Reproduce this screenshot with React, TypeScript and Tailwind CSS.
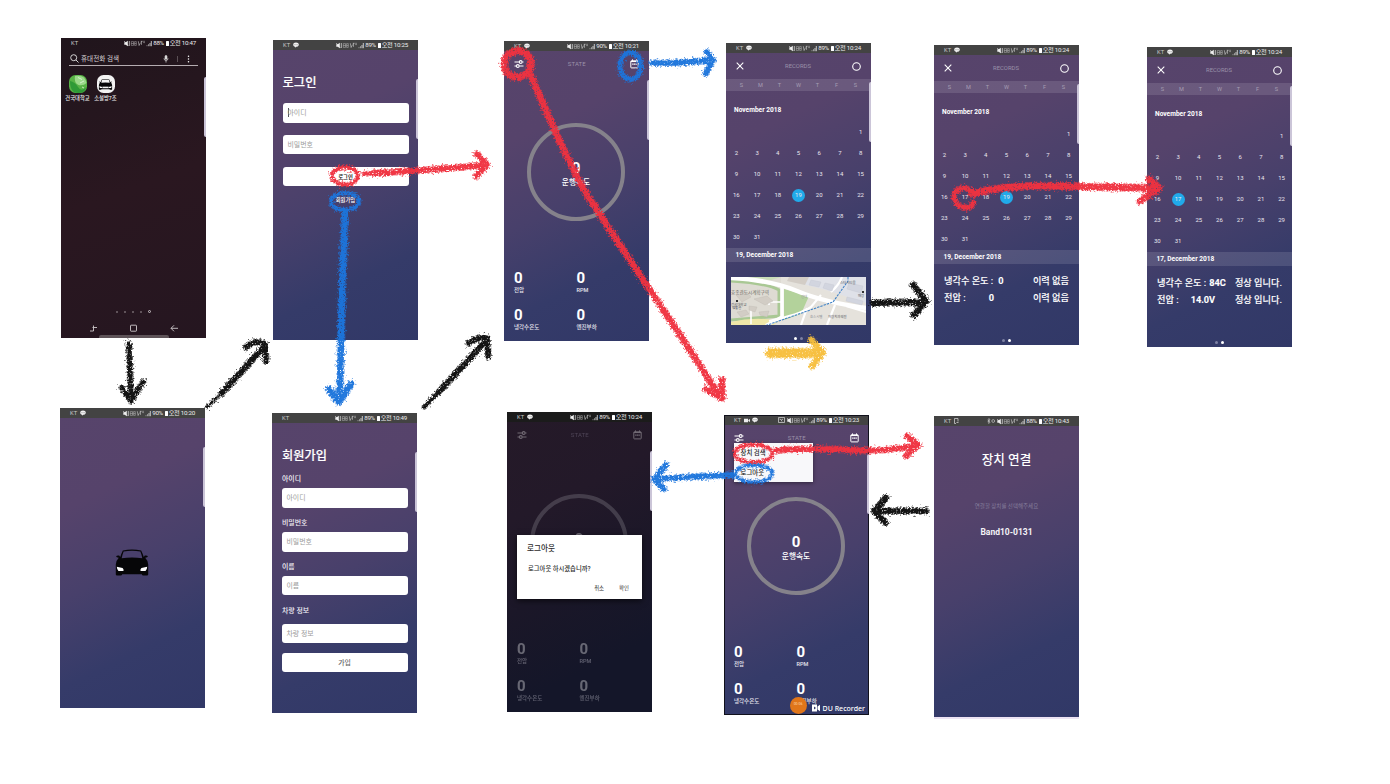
import type { ReactNode } from "react";

const FONT = "font-[Roboto,'Noto_Sans_CJK_KR',sans-serif]";
const PURPLE =
  "bg-[linear-gradient(154deg,#57446b_0%,#56436b_28%,#48406b_52%,#353b69_76%,#313867_100%)]";

/* ---------- status bar ---------- */

function Chat() {
  return (
    <svg width="6" height="6" viewBox="0 0 12 12">
      <path d="M6 1.200c3.200 0 5.600 1.800 5.600 4.200S9.200 9.600 6 9.600L4 11.500V9.300C1.900 8.700.4 7.300.4 5.400.4 3 2.800 1.200 6 1.200z" fill="#f2f2f2" />
      <path d="M3 5.400h1.300M5.400 5.400h1.300M7.800 5.400h1.300" stroke="#555" strokeWidth="1.300" />
    </svg>
  );
}

function Signals() {
  return (
    <svg width="28" height="7" viewBox="0 0 28 7" fill="none" stroke="#e8e8e8">
      <path d="M.3 2.300h1.400L3.800.8v5.400L1.700 4.700H.3z" fill="#eee" stroke="none" />
      <path d="M.2 1l4.200 5" strokeWidth=".6" stroke="#eee" />
      <path d="M5.300 1v5" strokeWidth=".7" />
      <path d="M7.300 1.600h2.200v3.800H7.300zM7.300 3.500h2.200M10.600 1.600h1.700v3.800h-1.700zM10.600 3.500h1.700" strokeWidth=".5" opacity=".75" />
      <path d="M14.300 1.200l.8 4.300 1.500-3M17.500 1.200v3.600M16.700 1.300h2M19.300 1.300h1.500M19.300 2.600h1.500" strokeWidth=".6" opacity=".85" />
      <path d="M23 6.200v-1M24.500 6.200V4.200" strokeWidth=".8" opacity=".7" />
      <path d="M26 6.200V3M27.300 6.200V1" strokeWidth=".8" />
    </svg>
  );
}

function StatusBar({
  pct,
  time,
  bg = "bg-[#434343]",
  chat = true,
  left,
  extra,
}: {
  pct: string;
  time: string;
  bg?: string;
  chat?: boolean;
  left?: ReactNode;
  extra?: ReactNode;
}) {
  return (
    <div className={`flex h-[10px] shrink-0 items-center pr-[10px] pl-[10px] text-[6.200px] leading-none text-[#ececec] ${bg}`}>
      <span className="mr-[3px] pt-[1px] text-[5.800px] text-[#c9c9c9]">KT</span>
      {left}
      {chat && <Chat />}
      <span className="ml-auto flex items-center whitespace-nowrap">
        {extra}
        <Signals />
        <span className="ml-[1px] tracking-[-0.400px]">{pct}</span>
        <span className="mr-[1px] ml-[2px] h-[5px] w-[3px] rounded-[0.5px] bg-white" />
        <span className="tracking-[-0.250px]">오전 {time}</span>
      </span>
    </div>
  );
}

/* ---------- phone frame ---------- */

function Phone({
  place,
  children,
  bg = PURPLE,
  handle = true,
}: {
  place: string;
  children: ReactNode;
  bg?: string;
  handle?: boolean;
}) {
  return (
    <section className={`absolute flex h-[300px] w-[145px] flex-col overflow-hidden ${place} ${bg}`}>
      {children}
      {handle && <span className="absolute top-[39px] right-0 h-[60px] w-[2px] rounded-l-[2px] bg-[#cbc5d8]" />}
    </section>
  );
}

/* ---------- icons ---------- */

function Sliders() {
  return (
    <svg width="10" height="10" viewBox="0 0 10 10" fill="none" stroke="#fff" strokeWidth="1.100">
      <path d="M.5 3h4.700M8.200 3h1.300M.5 7h1.800M5.300 7h4.200" />
      <circle cx="6.700" cy="3" r="1.400" />
      <circle cx="3.800" cy="7" r="1.400" />
    </svg>
  );
}

function Calendar() {
  return (
    <svg width="9" height="10" viewBox="0 0 9 10" fill="none" stroke="#fff">
      <rect x=".8" y="1.900" width="7.400" height="7" rx=".6" />
      <path d="M.8 2.400h7.400" strokeWidth="1.300" />
      <path d="M2.500.4v1.500M6.500.4v1.500" />
      <path d="M2.200 5.200h4.600" strokeWidth="1.200" strokeDasharray="1.300 .35" />
    </svg>
  );
}

function Car({ className, hollow = false }: { className: string; hollow?: boolean }) {
  const glass = hollow ? "#f3f3f3" : "#49406c";
  return (
    <svg className={className} viewBox="0 0 36 28">
      <path
        d="M8.500 1.500Q18-.4 27.500 1.500q1.500 3 2.700 6.800l1.100-1.600q2.700-.4 3.200 1.200-.3 1-2.800 1.100Q34.600 12 34.800 16v10.500q-.2 1-1.200 1h-4.300q-1 0-1.100-1.200H7.800q-.1 1.200-1.100 1.200H2.400q-1 0-1.200-1V16Q1.400 12 4.300 9 1.800 8.900 1.500 7.900q.5-1.600 3.200-1.200l1.100 1.600Q7 4.500 8.500 1.500z"
        fill="#060608"
      />
      <path d="M9.300 2.600Q18 1.100 26.700 2.600q1.200 3 2 7Q18 7.800 7.300 9.600q.8-4 2-7z" fill={glass} />
      <path d="M2.200 18.500l6 1.200q1.400 1.300 1 3H4Q2.400 21.500 2.200 18.500zM33.800 18.500l-6 1.200q-1.400 1.300-1 3H32q1.600-1.200 1.800-4.200z" fill="#fff" />
      {hollow && <path d="M10 19.500h16v4H10z" fill="#f3f3f3" />}
    </svg>
  );
}

/* ---------- home screen ---------- */

function Home() {
  return (
    <>
      <StatusBar pct="88%" time="10:47" bg="bg-transparent" chat={false} />
      <div className="mx-[8px] flex h-[18px] items-center border-b border-[#b5adb1] pt-[4px] text-[6.600px] leading-none text-[#d5d0d2]">
        <svg className="ml-px" width="9" height="9" viewBox="0 0 9 9" fill="none" stroke="#e6e6e6" strokeWidth=".9">
          <circle cx="3.700" cy="3.700" r="3" />
          <path d="M6 6l2.500 2.500" />
        </svg>
        <span className="ml-[2px] pt-[1px]">휴대전화 검색</span>
        <svg className="ml-auto" width="6" height="8" viewBox="0 0 6 8" fill="none" stroke="#e6e6e6" strokeWidth=".7">
          <rect x="2.100" y=".5" width="1.800" height="3.800" rx=".9" fill="#e6e6e6" />
          <path d="M1 3.300q0 2.200 2 2.200t2-2.200M3 5.500v2" />
        </svg>
        <span className="ml-[8px] h-[6px] w-px bg-[#5b5055]" />
        <svg className="mr-[8px] ml-[9px]" width="3" height="8" viewBox="0 0 3 8" fill="#fff">
          <circle cx="1.500" cy="1.200" r=".75" />
          <circle cx="1.500" cy="4" r=".75" />
          <circle cx="1.500" cy="6.800" r=".75" />
        </svg>
      </div>
      <div className="mt-[9px] ml-[2.500px] flex text-[5.300px] leading-none font-medium text-[#eee]">
        <div className="flex w-[28px] flex-col items-center gap-[2.500px] whitespace-nowrap">
          <svg width="18" height="18" viewBox="0 0 18 18">
            <rect width="18" height="18" rx="6.500" fill="#58b346" />
            <path d="M6 1Q16-1 17.500 8q-3 3-8 2Q5 8 6 1z" fill="#9bd98a" />
            <path d="M1 6q5 1 8 6t8 .5Q16 18 9 18 1 18 1 6z" fill="#2f9a36" />
            <path d="M9 2.500l4 2M11 8l4-2M13 12l2 1" stroke="#e3f6dd" strokeWidth=".8" />
          </svg>
          <span>건국대학교</span>
        </div>
        <div className="flex w-[28px] flex-col items-center gap-[2.500px] whitespace-nowrap">
          <span className="flex size-[18px] items-center justify-center rounded-[6.500px] bg-[#f3f3f3]">
            <Car className="h-[11px] w-[15px]" hollow />
          </span>
          <span>소설방7조</span>
        </div>
      </div>
      <div className="mt-auto flex items-center justify-center gap-[6px] pr-px">
        <span className="size-[2px] rounded-full bg-[#75696e]" />
        <span className="size-[2px] rounded-full bg-[#75696e]" />
        <span className="size-[2px] rounded-full bg-[#75696e]" />
        <span className="size-[2px] rounded-full bg-[#75696e]" />
        <span className="size-[3px] rounded-full border border-[#c9c2c5]" />
      </div>
      <svg className="mt-[11px] ml-[27px] shrink-0" width="92" height="9" viewBox="0 0 92 9" fill="none" stroke="#cfc9cc" strokeWidth=".9">
        <path d="M2 7h3.500V3.500M4.500 3.500H9M5.500 1.500v2" />
        <rect x="42.500" y="1.200" width="6" height="6" rx=".6" />
        <path d="M83 4.300h7M86 1.300l-3 3 3 3" />
      </svg>
      <span className="mt-[2px] ml-[38px] h-[3px] w-[70px] rounded-t-[2px] bg-[#5e5358]" />
    </>
  );
}

/* ---------- forms ---------- */

function Field({ text, top, caret = false }: { text: string; top: string; caret?: boolean }) {
  return (
    <div className={`mx-[9.500px] flex h-[19.500px] shrink-0 items-center rounded-[3px] bg-white pl-[5px] text-[6.900px] leading-none text-[#9b9b9b] ${top}`}>
      {caret && <span className="-mr-px h-[9px] w-px bg-[#555]" />}
      <span className="pt-[2px]">{text}</span>
    </div>
  );
}

function Login() {
  return (
    <>
      <StatusBar pct="89%" time="10:25" />
      <h1 className="mt-[24px] ml-[9.500px] flex h-[18px] items-center text-[12.300px] leading-none font-medium text-white [-webkit-text-stroke:0.15px_white]">로그인</h1>
      <Field text="아이디" top="mt-[11px]" caret />
      <Field text="비밀번호" top="mt-[12px]" />
      <div className="mx-[9.500px] mt-[12.500px] flex h-[19.500px] items-center justify-center rounded-[3px] bg-white pt-[2px] text-[5.300px] leading-none font-bold text-[#222]">로그인</div>
      <div className="mt-[10px] flex h-[10px] items-center justify-center text-[5.300px] leading-none font-medium text-white">회원가입</div>
    </>
  );
}

function Label({ text, top }: { text: string; top: string }) {
  return <div className={`ml-[10px] flex h-[9px] shrink-0 items-center pt-[2px] text-[6.900px] leading-none font-medium text-[#f3f1f6] ${top}`}>{text}</div>;
}

function SignUp() {
  return (
    <>
      <StatusBar pct="89%" time="10:49" chat={false} />
      <h1 className="mt-[24px] ml-[10px] flex h-[18px] items-center text-[12.200px] leading-none font-medium text-white [-webkit-text-stroke:0.15px_white]">회원가입</h1>
      <Label text="아이디" top="mt-[9px]" />
      <Field text="아이디" top="mt-[5px]" />
      <Label text="비밀번호" top="mt-[10.500px]" />
      <Field text="비밀번호" top="mt-[5px]" />
      <Label text="이름" top="mt-[10px]" />
      <Field text="이름" top="mt-[5px]" />
      <Label text="차량 정보" top="mt-[10.500px]" />
      <Field text="차량 정보" top="mt-[9px]" />
      <div className="mx-[9.500px] mt-[9.500px] flex h-[19.500px] items-center justify-center rounded-[3px] bg-white pt-[2px] text-[6.900px] leading-none font-medium text-[#666]">가입</div>
    </>
  );
}

/* ---------- state ---------- */

function Stat({ label }: { label: string }) {
  return (
    <div className="flex h-[37px] w-[62.500px] flex-col items-start leading-none">
      <span className="flex h-[16px] items-center text-[15px] font-bold text-white">0</span>
      <span className="flex h-[9px] items-center text-[5.500px] font-medium text-[#e6e4ee]">{label}</span>
    </div>
  );
}

function StateBody() {
  return (
    <>
      <div className="flex h-[26px] shrink-0 items-center justify-between pr-[10px] pl-[9.500px]">
        <Sliders />
        <span className="text-[6px] leading-none tracking-[0.100px] text-[#9a91a9]">STATE</span>
        <Calendar />
      </div>
      <div className="mt-[45.500px] mr-px flex size-[98px] shrink-0 flex-col items-center justify-center gap-[3px] self-center rounded-full border-4 border-[#85828b] pt-[4px]">
        <span className="text-[15px] leading-none font-bold text-white">0</span>
        <span className="text-[7.700px] leading-none font-medium text-white">운행속도</span>
      </div>
      <div className="mt-[49.500px] ml-[10px] flex flex-wrap">
        <Stat label="전압" />
        <Stat label="RPM" />
        <Stat label="냉각수온도" />
        <Stat label="엔진부하" />
      </div>
    </>
  );
}

function LogoutDialog() {
  return (
    <div className="absolute top-[123px] left-[10px] flex h-[64px] w-[125px] flex-col bg-white leading-none text-[#2c2c2c] shadow-[0_2px_6px_rgba(0,0,0,0.6)]">
      <div className="mt-[9px] ml-[10px] flex h-[10px] items-center text-[7.600px] font-medium">로그아웃</div>
      <div className="mt-[11px] ml-[11px] flex h-[9px] items-center text-[6.300px] font-medium">로그아웃 하시겠습니까?</div>
      <div className="mt-[10px] mr-[13px] flex h-[9px] items-center justify-end gap-[15px] text-[5.400px]">
        <span>취소</span>
        <span>확인</span>
      </div>
    </div>
  );
}

function MenuOverlay() {
  return (
    <>
      <div className="absolute top-[28px] left-[10px] flex h-[39px] w-[78.500px] flex-col bg-[#f8f8fa] pl-[6.500px] text-[6.400px] leading-none font-medium text-[#1c1c1c] shadow-[0_1px_4px_rgba(0,0,0,0.45)]">
        <span className="flex h-[19.500px] items-center pt-[1px]">장치 검색</span>
        <span className="flex h-[19.500px] items-center pt-[1px]">로그아웃</span>
      </div>
      <div className="absolute top-[281.500px] left-[65.500px] flex size-[17px] items-center justify-center rounded-full bg-[#e0761a] text-[3.500px] text-[#ffd9ae]">00:06</div>
      <div className="absolute right-[4px] bottom-[3px] flex items-center gap-[3px] leading-none font-medium text-white">
        <svg width="8" height="8" viewBox="0 0 8 8">
          <path d="M0 .5h5v7H0zM5.500 2.500L8 .8v6.400L5.500 5.500z" fill="#fff" />
          <path d="M2 2.500l2 1.500-2 1.500z" fill="#333a68" />
        </svg>
        <span className="font-['Noto_Sans',sans-serif] text-[7px]">DU Recorder</span>
      </div>
      <span className="absolute inset-0 border border-[#11111c]" />
    </>
  );
}

/* ---------- records ---------- */

function MapView() {
  return (
    <svg className="mx-[5px] mt-[14.500px] shrink-0" width="135" height="48.500" viewBox="0 0 135 48.500">
      <rect width="135" height="48.500" fill="#e5e2dc" />
      <path d="M68 0h67v26L95 13 60 4z" fill="#dfe1e8" />
      <path d="M58 0h20l-4 8-18-4z" fill="#d3cdc6" />
      <path d="M0 0h50v44H0z" fill="#dedbd3" />
      <path d="M0 4q35 2 48 9v26L0 43" fill="none" stroke="#a9c894" strokeWidth="3" />
      <path d="M0 0h50l-10 3z" fill="#c9dcb8" />
      <path d="M53 12l25 7-8 18-17 6z" fill="#b3d29b" />
      <path d="M0 45q25-6 48-1l-6 4.500H0z" fill="#efe7a8" />
      <g fill="none" stroke="#fff">
        <path d="M0 1q40 2 66 13t69 17" strokeWidth="4.500" />
        <path d="M51 8v32l-16 8.500" strokeWidth="3.500" />
        <path d="M38 44q30-6 42-14l10-12M96 48l8-20M76 31l-6 17M115 29l20 6M100 15q8-7 11-15" strokeWidth="2.200" />
        <path d="M38 25h12M20 33v14M38 25v3" strokeWidth="1.600" />
      </g>
      <g fill="#d2d5df" stroke="#c4c7d2" strokeWidth=".4">
        <path d="M80 3l10 2-2 5-10-2zM94 6l9 2-2 6-9-3zM118 6l14 3-2 7-14-4zM116 20l16 4-1 4-16-4z" />
      </g>
      <g fill="#d2cdc5" stroke="#bfbab2" strokeWidth=".4">
        <path d="M5 18l11-3 4 5-9 5zM23 22l13-3 6 5-8 4zM6 35l9-2 3 4-8 3zM18 29l8 1-2 5-6-2zM28 35l10-1-2 6-7-2z" />
      </g>
      <path d="M117 0v4L102 25 65 38 35 48.500" fill="none" stroke="#3f82c6" strokeWidth="1.100" strokeDasharray="2.400 1" />
      <g fontSize="3.400" fill="#55585c" fontFamily="'Noto Sans CJK KR', sans-serif">
        <text x="0" y="17" fontSize="4.600" fill="#6e6b66">효종관도시계획구역</text>
        <text x="0" y="28.500">건국대학교</text>
        <text x="1" y="32">생활관</text>
        <text x="109" y="7">스타시티몰</text>
        <text x="127" y="20">매장</text>
        <text x="97" y="41">자양치과의원</text>
        <text x="79" y="41" fill="#8d9094">효스시텔</text>
        <text x="70" y="21" fill="#97989b">건대</text>
      </g>
      <path d="M5 23h2v2H5zM131 14h2v2h-2z" fill="#333" />
    </svg>
  );
}

const WEEK = ["S", "M", "T", "W", "T", "F", "S"];

function Records({ selected, page, children }: { selected: number; page: number; children: ReactNode }) {
  const cells: (number | null)[] = [null, null, null, null, null, null, ...Array.from({ length: 31 }, (_, i) => i + 1)];
  return (
    <>
      <StatusBar pct="89%" time="10:24" />
      <div className="flex h-[26px] shrink-0 items-center justify-between pr-[10px] pl-[10px]">
        <svg width="8" height="8" viewBox="0 0 8 8" stroke="#fff" strokeWidth="1.050">
          <path d="M.7.700l6.600 6.600M7.300.7L.7 7.300" />
        </svg>
        <span className="pt-[1px] text-[5.900px] leading-none text-[#9a91a9]">RECORDS</span>
        <svg width="9" height="9" viewBox="0 0 9 9" fill="none" stroke="#fff" strokeWidth="1.100">
          <circle cx="4.500" cy="4.500" r="3.800" />
        </svg>
      </div>
      <div className="grid h-[11.500px] shrink-0 grid-cols-7 items-center bg-white/12 pt-[2px] pr-[6px] pl-[6px] text-center text-[5.600px] leading-none text-[#a69db3]">
        {WEEK.map((d, i) => (
          <span key={i}>{d}</span>
        ))}
      </div>
      <div className="mt-[14px] ml-[8px] flex h-[10px] shrink-0 items-center pt-[2px] text-[6.600px] leading-none font-bold text-white">November 2018</div>
      <div className="mt-[7px] grid shrink-0 grid-cols-7 text-[6px] leading-none text-[#e9e6ef]">
        {cells.map((n, i) => (
          <span key={i} className="flex h-[21px] items-center justify-center">
            {n !== null && n === selected ? (
              <span className="flex size-[13px] items-center justify-center rounded-full bg-[#21aaea]">{n}</span>
            ) : (
              n
            )}
          </span>
        ))}
      </div>
      <div className="flex h-[14.500px] shrink-0 items-center bg-white/12 pt-[2px] pl-[9.500px] text-[6.600px] leading-none font-bold text-white">
        {selected}, December 2018
      </div>
      {children}
      <div className="mt-auto mb-[3px] flex items-center justify-center gap-[3.500px]">
        <span className={`size-[3px] rounded-full ${page === 0 ? "bg-white" : "bg-[#7d81a3]"}`} />
        <span className={`size-[3px] rounded-full ${page === 1 ? "bg-white" : "bg-[#7d81a3]"}`} />
      </div>
    </>
  );
}

function Reading({ label, value, result, gap, top }: { label: string; value: string; result: string; gap: string; top: string }) {
  return (
    <div className={`mr-[10px] ml-[10px] flex h-[12px] shrink-0 items-center whitespace-nowrap text-[9.200px] leading-none font-medium text-white [-webkit-text-stroke:0.1px_white] ${top}`}>
      <span>{label}</span>
      <span className={`font-bold ${gap}`}>{value}</span>
      <span className="ml-auto">{result}</span>
    </div>
  );
}

/* ---------- device ---------- */

function Device() {
  return (
    <>
      <StatusBar
        pct="88%"
        time="10:43"
        chat={false}
        left={
          <svg width="5" height="6" viewBox="0 0 5 6" fill="none" stroke="#ddd" strokeWidth=".7">
            <path d="M.5.500h3.500v3M2 5.500H.5v-5M2.500 4.500h2" />
          </svg>
        }
        extra={
          <svg className="mr-[2px]" width="8" height="6" viewBox="0 0 8 6" fill="none" stroke="#ddd" strokeWidth=".6">
            <path d="M.5 1.700l2.500 2.500L1.800 5.500v-5L3 1.700.5 4.200" />
            <circle cx="6.200" cy="3" r="1.400" />
          </svg>
        }
      />
      <h1 className="mt-[25px] flex h-[18px] items-center justify-center text-[12.600px] leading-none font-medium text-white">장치 연결</h1>
      <p className="mt-[33px] flex h-[10px] items-center justify-center text-[5.500px] leading-none text-[#857e9c]">연결할 장치를 선택해주세요</p>
      <p className="mt-[14px] flex h-[12px] items-center justify-center text-[8.500px] leading-none font-bold text-[#f4f3f7]">Band10-0131</p>
    </>
  );
}

/* ---------- hand-drawn annotations ---------- */

const RED = "#f0303f";
const BLUE = "#1f74dc";
const BLACK = "#0c0c0c";
const YELLOW = "#f7bf3c";

const STROKES: { d: string; c: string; w: number }[] = [
  { d: "M129 344L131 397M122 388L131 401L143 382", c: BLACK, w: 6 },
  { d: "M207 407L226 389", c: BLACK, w: 3.500 },
  { d: "M222 393L262 349M246 347Q256 339 265 344L266 361", c: BLACK, w: 6.500 },
  { d: "M424 407L440 391", c: BLACK, w: 4.500 },
  { d: "M438 393L484 343M469 343Q480 336 487 338L488 356", c: BLACK, w: 6.500 },
  { d: "M873 303L923 302M913 285L926 301L914 315", c: BLACK, w: 7 },
  { d: "M926 511L876 511M886 498L874 511L886 523", c: BLACK, w: 6.500 },
  { d: "M332 176a13 8.500 0 1 0 26 0a13 8.500 0 1 0 -26 0", c: RED, w: 4.500 },
  { d: "M364 174L380 172", c: RED, w: 5 },
  { d: "M375 173Q420 171 484 165M477 154L487 165L476 176", c: RED, w: 6.500 },
  { d: "M331 201.500a14 8.500 0 1 0 28 0a14 8.500 0 1 0 -28 0", c: BLUE, w: 4.500 },
  { d: "M345 213Q342 280 341 340T339 398M329 389L339 402L351 384", c: BLUE, w: 7.500 },
  { d: "M504 64a13.500 13 0 1 0 27 0a13.500 13 0 1 0 -27 0", c: RED, w: 7.500 },
  { d: "M531 76L558 138L584 190L610 230L650 290L686 344L719 395M706 389L722 398L722 380", c: RED, w: 7 },
  { d: "M620 66a10.500 13.500 0 1 0 21 0a10.500 13.500 0 1 0 -21 0", c: BLUE, w: 5.500 },
  { d: "M652 63Q670 64 710 60M707 52L713 60L706 73", c: BLUE, w: 6.500 },
  { d: "M770 353L816 353", c: YELLOW, w: 10 },
  { d: "M811 340L823 353L812 366", c: YELLOW, w: 7 },
  { d: "M967 207Q956 208 954 198Q954 189 964 188Q972 189 975 195M968 208Q974 205 973 202", c: RED, w: 5.500 },
  { d: "M972 194Q1000 185 1050 186T1155 188M1149 179L1159 188L1140 201", c: RED, w: 7.500 },
  { d: "M734.500 453.500a19 9 0 1 0 38 0a19 9 0 1 0 -38 0", c: RED, w: 4 },
  { d: "M776 450Q820 448 850 450T914 446M907 436L918 445L906 456", c: RED, w: 6.500 },
  { d: "M735.500 473.500a18.500 8.500 0 1 0 37 0a18.500 8.500 0 1 0 -37 0", c: BLUE, w: 4 },
  { d: "M733 475Q700 476 657 479M666 465L654 479L664 489", c: BLUE, w: 6.500 },
];

function Annotations() {
  return (
    <svg className="pointer-events-none absolute inset-0" width="1390" height="784" viewBox="0 0 1390 784" fill="none">
      <defs>
        <filter id="crayon" filterUnits="userSpaceOnUse" x="0" y="0" width="1390" height="784">
          <feTurbulence type="fractalNoise" baseFrequency="0.6" numOctaves="2" seed="4" result="n" />
          <feDisplacementMap in="SourceGraphic" in2="n" scale="5" xChannelSelector="R" yChannelSelector="G" result="d" />
          <feColorMatrix in="n" type="matrix" values="0 0 0 0 0  0 0 0 0 0  0 0 0 0 0  0 0 5 0 -0.950" result="grain" />
          <feComposite in="d" in2="grain" operator="in" result="g" />
          <feGaussianBlur in="g" stdDeviation="0.6" />
        </filter>
        <filter id="dust" filterUnits="userSpaceOnUse" x="0" y="0" width="1390" height="784">
          <feTurbulence type="fractalNoise" baseFrequency="0.5" numOctaves="2" seed="11" result="n" />
          <feDisplacementMap in="SourceGraphic" in2="n" scale="8" xChannelSelector="R" yChannelSelector="G" result="d" />
          <feColorMatrix in="n" type="matrix" values="0 0 0 0 0  0 0 0 0 0  0 0 0 0 0  0 0 6 0 -2.400" result="grain" />
          <feComposite in="d" in2="grain" operator="in" result="g" />
          <feGaussianBlur in="g" stdDeviation="0.5" />
        </filter>
      </defs>
      <g filter="url(#dust)" strokeLinecap="round" strokeLinejoin="round" opacity=".65">
        {STROKES.map((s, i) => (
          <path key={i} d={s.d} stroke={s.c} strokeWidth={s.w + 1} />
        ))}
      </g>
      <g filter="url(#crayon)" strokeLinecap="round" strokeLinejoin="round" opacity=".95">
        {STROKES.map((s, i) => (
          <path key={i} d={s.d} stroke={s.c} strokeWidth={s.w - 1.2} />
        ))}
      </g>
    </svg>
  );
}

export default function App() {
  return (
    <main className={`relative h-[784px] w-[1390px] overflow-hidden bg-white ${FONT}`}>
      <Phone place="top-[38px] left-[61px]" bg="bg-[linear-gradient(160deg,#20151c,#2a1720_50%,#251620)]">
        <Home />
      </Phone>
      <Phone place="top-[40px] left-[273px]">
        <Login />
      </Phone>
      <Phone place="top-[41px] left-[504px]">
        <StatusBar pct="90%" time="10:21" />
        <StateBody />
      </Phone>
      <Phone place="top-[43px] left-[726px]">
        <Records selected={19} page={0}>
          <MapView />
        </Records>
      </Phone>
      <Phone place="top-[45px] left-[934px]">
        <Records selected={19} page={1}>
          <Reading label="냉각수 온도 :" value="0" result="이력 없음" gap="ml-[5px]" top="mt-[10.500px]" />
          <Reading label="전압 :" value="0" result="이력 없음" gap="ml-[23px]" top="mt-[5px]" />
        </Records>
      </Phone>
      <Phone place="top-[47px] left-[1147px]">
        <Records selected={17} page={1}>
          <Reading label="냉각수 온도 :" value="84C" result="정상 입니다." gap="ml-[3px]" top="mt-[10.500px]" />
          <Reading label="전압 :" value="14.0V" result="정상 입니다." gap="ml-[12px]" top="mt-[5px]" />
        </Records>
      </Phone>
      <Phone place="top-[408px] left-[60px]">
        <StatusBar pct="90%" time="10:20" />
        <Car className="mt-[131px] mr-px h-[27px] w-[36px] self-center" />
      </Phone>
      <Phone place="top-[413px] left-[272px]">
        <SignUp />
      </Phone>
      <Phone place="top-[412px] left-[507px]" bg="bg-[linear-gradient(154deg,#251a28_0%,#231929_30%,#1b1728_55%,#141629_80%)]">
        <StatusBar pct="89%" time="10:24" bg="bg-[#1b1b1b]" />
        <div className="flex flex-col opacity-35">
          <StateBody />
        </div>
        <LogoutDialog />
      </Phone>
      <Phone place="top-[415px] left-[724px]">
        <StatusBar
          pct="89%"
          time="10:23"
          left={
            <svg className="mr-[2px]" width="6" height="5" viewBox="0 0 6 5">
              <path d="M0 .8h4v3.400H0zM4.300 2L6 1v3L4.300 3z" fill="#eee" />
            </svg>
          }
          extra={
            <svg className="mr-[2px]" width="7" height="6" viewBox="0 0 7 6" fill="none" stroke="#ddd" strokeWidth=".7">
              <path d="M.5.500h6v5h-6zM1.500 2q2 0 2.500 2.500M5 2l-1.500 1" />
            </svg>
          }
        />
        <StateBody />
        <MenuOverlay />
      </Phone>
      <Phone place="top-[416px] left-[934px]" handle={false}>
        <Device />
      </Phone>
      <span className="absolute top-[716px] left-[934px] h-[3px] w-[145px] border-t border-[#34396a] bg-[#ece3f3]" />
      <Annotations />
    </main>
  );
}
